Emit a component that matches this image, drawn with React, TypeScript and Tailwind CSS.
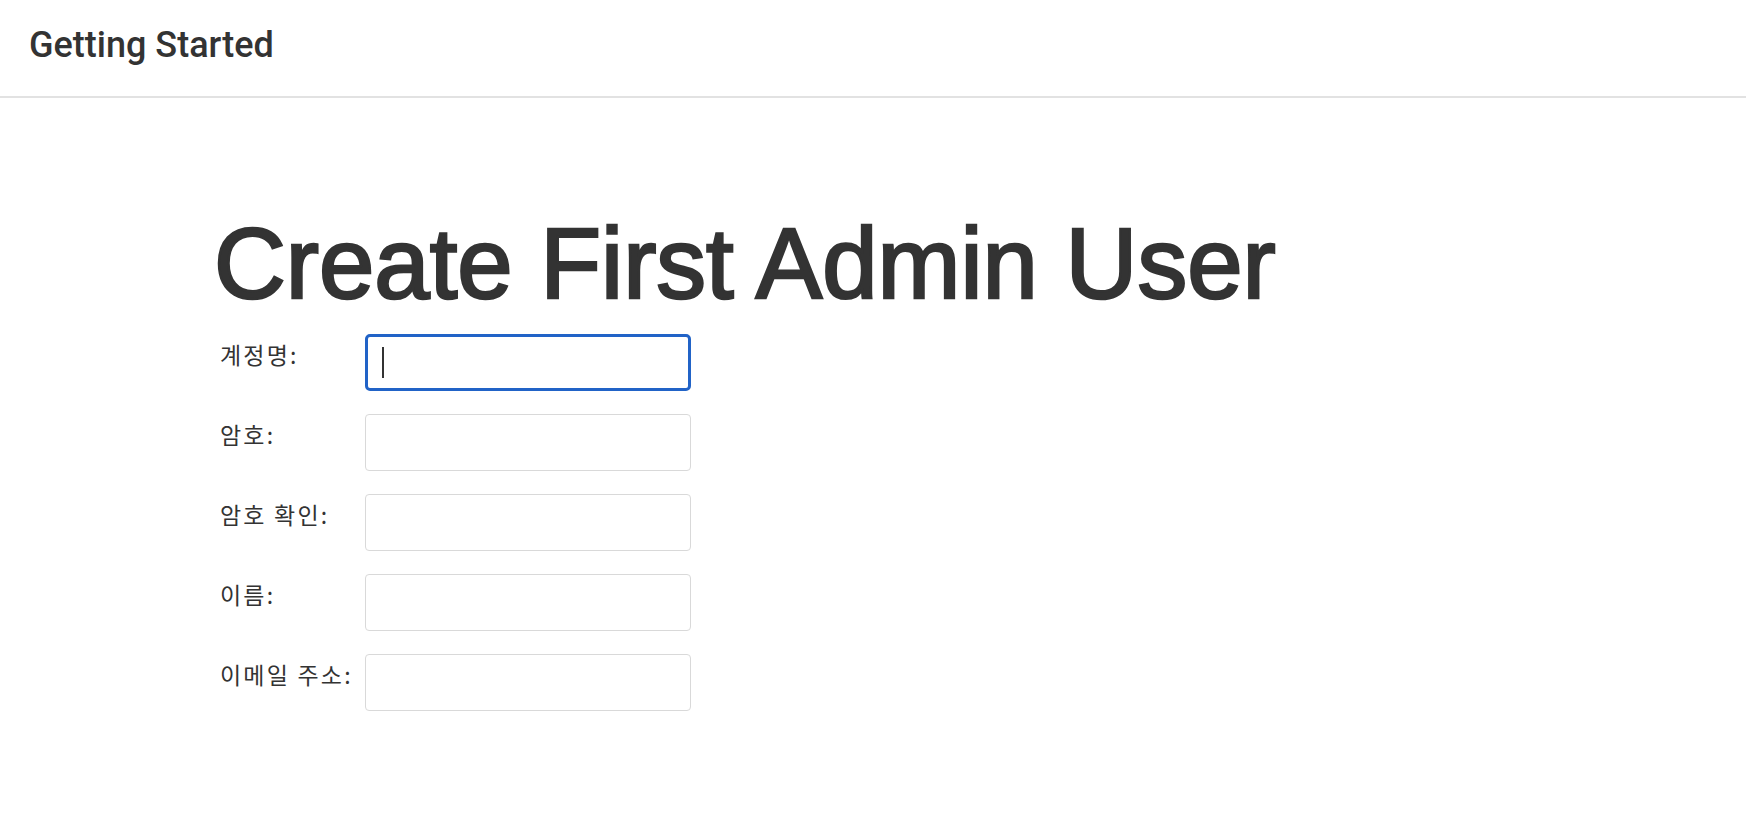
import React from "react";

const labels = ["계정명:", "암호:", "암호 확인:", "이름:", "이메일 주소:"];

export default function App() {
  return (
    <div className="min-h-screen bg-white text-[#333]">
      <header className="h-[98px] border-b-2 border-[#e2e2e2] flex items-center px-[29px] pb-[6px]">
        <h1
          className="text-[36px] font-medium text-[#333]"
          style={{ fontFamily: "Roboto, 'Noto Sans', sans-serif" }}
        >
          Getting Started
        </h1>
      </header>
      <main className="pt-[116px]">
        <h2
          className="pl-[214px] text-[99.5px] leading-[1] text-[#333] [-webkit-text-stroke:2.6px_#333]"
          style={{ fontFamily: "'Liberation Sans', Arial, sans-serif" }}
        >
          Create First Admin User
        </h2>
        <div
          className="mt-[20px] pl-[220px] grid grid-cols-[145px_326px] gap-y-[23px]"
          style={{ fontFamily: "'Noto Sans CJK KR', 'Noto Sans', sans-serif" }}
        >
          {labels.map((label, i) => (
            <React.Fragment key={label}>
              <label className="text-[23px] leading-[1.5] pt-[3px] tracking-[2.2px] whitespace-nowrap text-[#333]">
                {label}
              </label>
              {i === 0 ? (
                <div className="h-[57px] border-[3px] border-[#2163c7] rounded-[5px] flex items-center pl-[14px]">
                  <span className="block w-[2px] h-[31px] bg-[#333]" />
                </div>
              ) : (
                <input
                  type={i === 1 || i === 2 ? "password" : "text"}
                  className="h-[57px] w-[326px] border border-[#d9d9d9] rounded-[4px] outline-none"
                />
              )}
            </React.Fragment>
          ))}
        </div>
      </main>
    </div>
  );
}
